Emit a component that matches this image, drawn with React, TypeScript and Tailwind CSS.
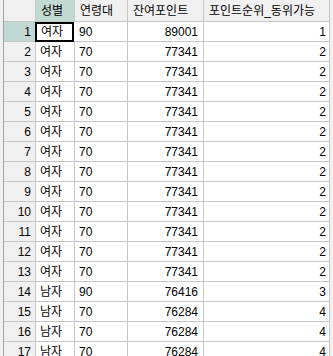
import React from "react";

type Row = { g: string; a: string; p: string; r: string };

const rows: Row[] = [
  { g: "여자", a: "90", p: "89001", r: "1" },
  ...Array.from({ length: 12 }, () => ({ g: "여자", a: "70", p: "77341", r: "2" })),
  { g: "남자", a: "90", p: "76416", r: "3" },
  ...Array.from({ length: 3 }, () => ({ g: "남자", a: "70", p: "76284", r: "4" })),
];

const font = { fontFamily: '"Liberation Sans", "Noto Sans CJK KR", sans-serif' };

export default function App() {
  return (
    <div
      className="w-[333px] h-[356px] overflow-hidden bg-[#f0f0f0] flex text-[12px] text-black leading-none"
      style={font}
    >
      <div className="w-[3px] shrink-0 bg-[#f0f0f0] border-r border-[#a0a0a0] box-content" />
      <div className="flex flex-col w-[326px] shrink-0">
        <div className="flex h-[22px] shrink-0">
          <div className="w-[32px] h-[22px] bg-[#f0f0f0] border-r border-b border-[#c6c6c6]" />
          <div className="w-[39px] h-[22px] bg-[#c0dad3] border-r border-b border-[#c6c6c6] pl-[5px] flex items-center">
            성별
          </div>
          <div className="w-[53px] h-[22px] bg-[#f0f0f0] border-r border-b border-[#c6c6c6] pl-[5px] flex items-center">
            연령대
          </div>
          <div className="w-[76px] h-[22px] bg-[#f0f0f0] border-r border-b border-[#c6c6c6] pl-[5px] flex items-center">
            잔여포인트
          </div>
          <div className="w-[126px] h-[22px] bg-[#f0f0f0] border-r border-b border-[#c6c6c6] pl-[5px] flex items-center">
            포인트순위_동위가능
          </div>
        </div>
        {rows.map((row, i) => {
          const sel = i === 0;
          return (
            <div key={i} className="flex h-[20px] shrink-0">
              <div
                className={`w-[32px] h-[20px] border-r border-b border-[#c6c6c6] pr-[4px] flex items-center justify-end ${
                  sel ? "bg-[#c0dad3]" : "bg-[#f0f0f0]"
                }`}
              >
                {i + 1}
              </div>
              {sel ? (
                <div className="w-[39px] h-[20px] bg-white border-b border-[#c6c6c6] flex">
                  <div className="w-[39px] h-[20px] -ml-px border-2 border-black pl-[4px] flex items-center">
                    {row.g}
                  </div>
                </div>
              ) : (
                <div className="w-[39px] h-[20px] bg-white border-r border-b border-[#c6c6c6] pl-[4px] flex items-center">
                  {row.g}
                </div>
              )}
              <div className="w-[53px] h-[20px] bg-white border-r border-b border-[#c6c6c6] pl-[4px] flex items-center">
                {row.a}
              </div>
              <div className="w-[76px] h-[20px] bg-white border-r border-b border-[#c6c6c6] pr-[5px] flex items-center justify-end">
                {row.p}
              </div>
              <div className="w-[126px] h-[20px] bg-white border-r border-b border-[#c6c6c6] pr-[3px] flex items-center justify-end">
                {row.r}
              </div>
            </div>
          );
        })}
      </div>
      <div className="flex-1 bg-[#f0f0f0]" />
    </div>
  );
}
